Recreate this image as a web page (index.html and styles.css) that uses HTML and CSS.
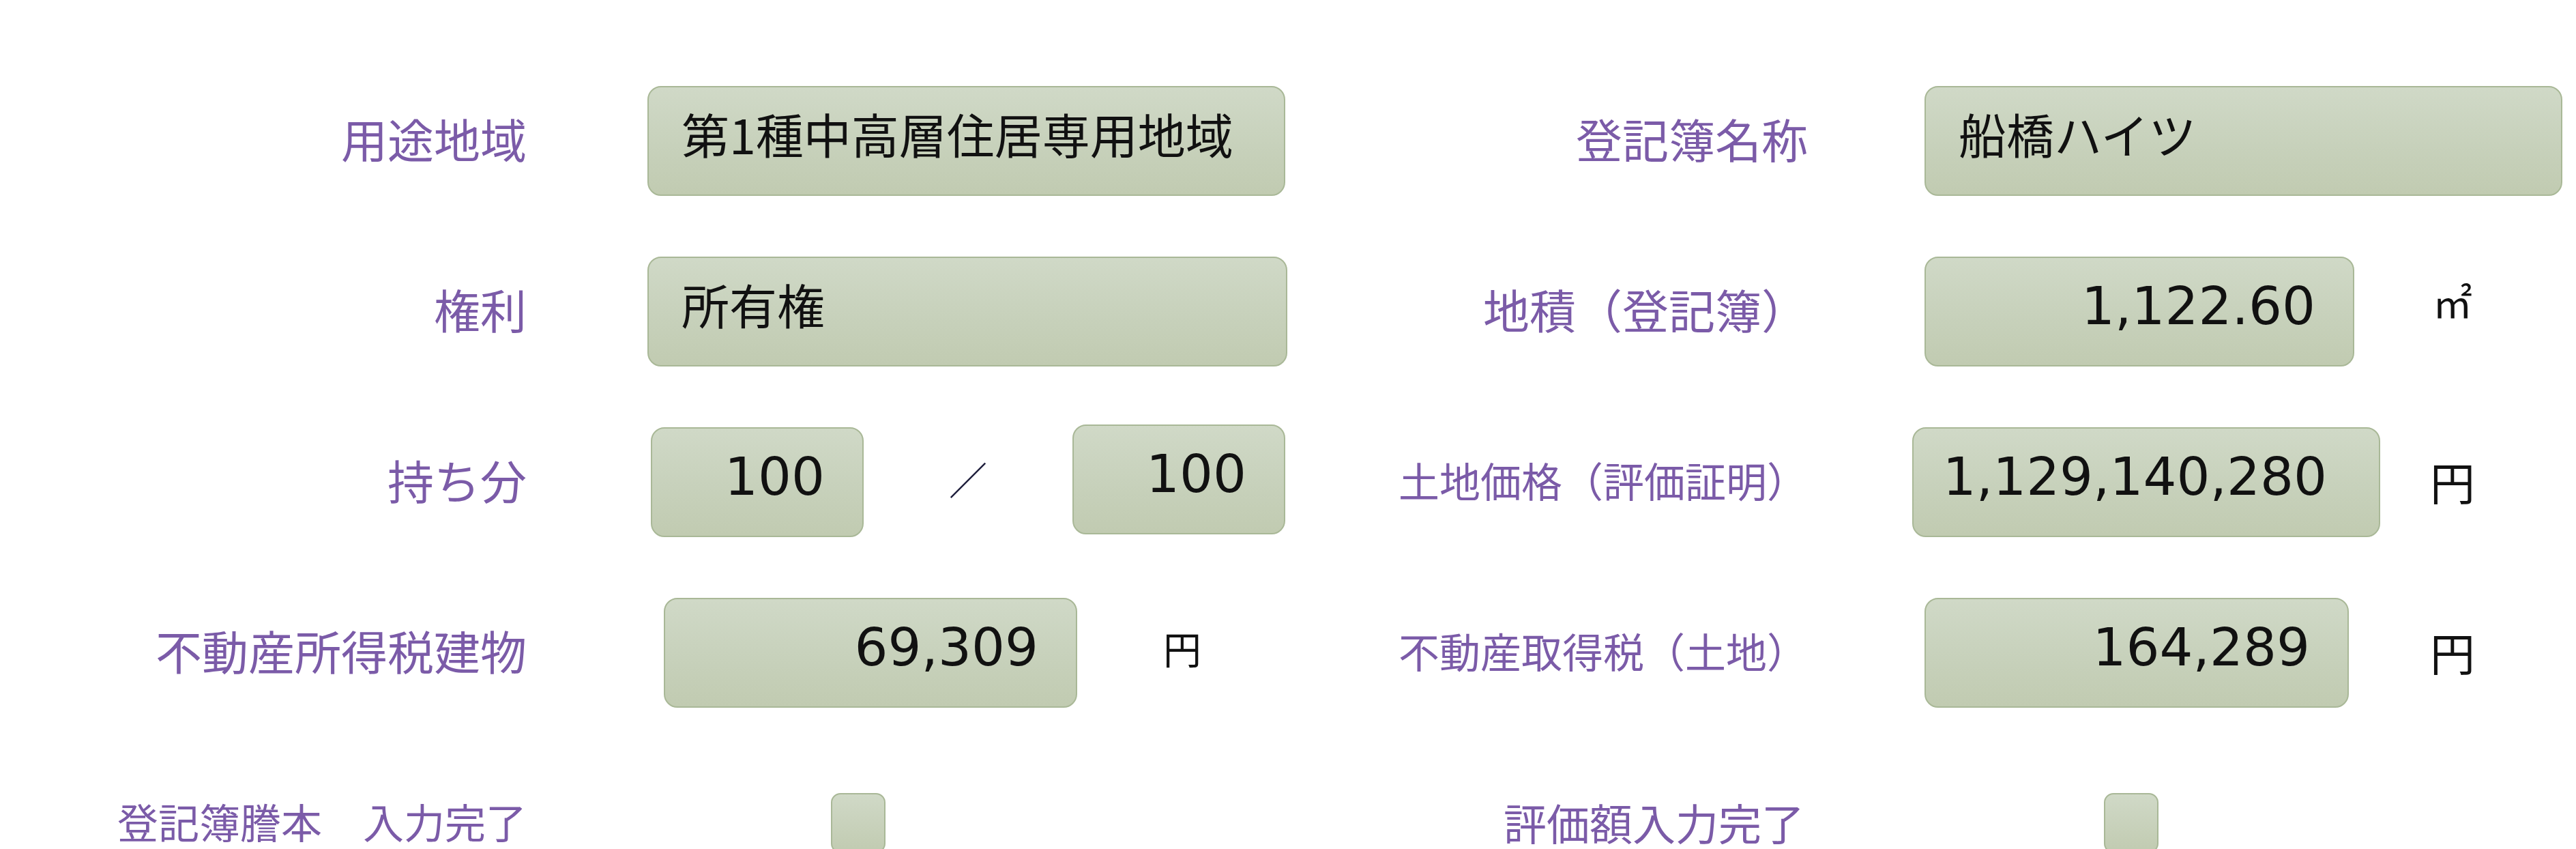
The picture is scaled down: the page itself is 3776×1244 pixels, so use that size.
FILE: index.html
```html
<!DOCTYPE html>
<html lang="ja">
<head>
<meta charset="utf-8">
<title>登記簿情報</title>
<link rel="stylesheet" href="styles.css">
</head>
<body>
<main class="form">
  <div class="row">
    <div class="label">用途地域</div>
    <div class="cell-l">
      <div class="field text w-935">第1種中高層住居専用地域</div>
    </div>
    <div class="label label-r">登記簿名称</div>
    <div class="cell-r">
      <div class="field text w-935 span-all off-18">船橋ハイツ</div>
    </div>
  </div>

  <div class="row">
    <div class="label">権利</div>
    <div class="cell-l">
      <div class="field text w-938">所有権</div>
    </div>
    <div class="label label-r">地積（登記簿）</div>
    <div class="cell-r">
      <div class="field num w-630 off-18">1,122.60</div>
      <div class="unit unit-m2">㎡</div>
    </div>
  </div>

  <div class="row">
    <div class="label">持ち分</div>
    <div class="cell-l">
      <div class="ratio">
        <div class="field num w-312">100</div>
        <div class="slash">／</div>
        <div class="field num w-312 up-4">100</div>
      </div>
    </div>
    <div class="label label-r label-sm">土地価格（評価証明）</div>
    <div class="cell-r">
      <div class="field num w-686 pad-r-wide">1,129,140,280</div>
      <div class="unit">円</div>
    </div>
  </div>

  <div class="row">
    <div class="label">不動産所得税建物</div>
    <div class="cell-l">
      <div class="field num w-606 off-24">69,309</div>
      <div class="unit unit-sm">円</div>
    </div>
    <div class="label label-r label-sm">不動産取得税（土地）</div>
    <div class="cell-r">
      <div class="field num w-622 off-18">164,289</div>
      <div class="unit">円</div>
    </div>
  </div>

  <div class="row">
    <div class="label label-sm">登記簿謄本　入力完了</div>
    <div class="cell-l">
      <div class="check check-l"></div>
    </div>
    <div class="label label-r label-md">評価額入力完了</div>
    <div class="cell-r">
      <div class="check check-r"></div>
    </div>
  </div>
</main>
</body>
</html>
```

FILE: styles.css
```css
html, body {
  margin: 0;
  padding: 0;
  background: #ffffff;
}

body {
  font-family: "Noto Sans CJK JP", "Noto Sans", sans-serif;
  color: #111111;
  overflow: hidden;
}

.form {
  padding-top: 81px;
  display: flex;
  flex-direction: column;
}

.row {
  display: grid;
  grid-template-columns: 772px 177px 1001px 700px 153px 973px;
  height: 250px;
  align-items: center;
}

.label {
  grid-column: 1;
  text-align: right;
  font-size: 68px;
  line-height: 1;
  color: #7b5ba8;
  padding-bottom: 6px;
  white-space: nowrap;
}

.label-r {
  grid-column: 4;
}

.label-sm {
  font-size: 60px;
}

.label-md {
  font-size: 63px;
  padding-right: 5px;
}

.cell-l {
  grid-column: 3;
  display: flex;
  align-items: center;
}

.cell-r {
  grid-column: 6;
  display: grid;
  grid-template-columns: 757px 70px;
  align-items: center;
}

.field {
  box-sizing: border-box;
  height: 161px;
  border: 2px solid #a9b897;
  border-radius: 20px;
  background: linear-gradient(to bottom, #d0d9c7 0%, #c7d1bb 55%, #c1cbb1 100%);
  display: flex;
  align-items: center;
  white-space: nowrap;
}

.text {
  font-size: 70px;
  line-height: 1;
  padding-left: 48px;
  padding-bottom: 20px;
}

.num {
  font-family: "DejaVu Sans", "Noto Sans CJK JP", sans-serif;
  font-size: 77px;
  line-height: 1;
  justify-content: flex-end;
  padding-right: 55px;
  padding-bottom: 16px;
}

.pad-r-wide {
  padding-right: 76px;
}

.span-all {
  grid-column: 1 / -1;
}

.w-935 { width: 935px; }
.w-938 { width: 938px; }
.w-312 { width: 312px; }
.w-630 { width: 630px; }
.w-686 { width: 686px; }
.w-606 { width: 606px; }
.w-622 { width: 622px; }

.off-18 { margin-left: 18px; }
.off-24 { margin-left: 24px; }

.up-4 { margin-bottom: 8px; }

.ratio {
  width: 930px;
  margin-left: 5px;
  display: flex;
  align-items: center;
  justify-content: space-between;
}

.slash {
  font-size: 56px;
  line-height: 1;
  color: #1c1c3a;
  padding-bottom: 10px;
}

.unit {
  font-size: 66px;
  line-height: 1;
  text-align: center;
  color: #111111;
  padding-bottom: 4px;
}

.unit-m2 {
  font-size: 58px;
  padding-bottom: 30px;
}

.unit-sm {
  font-size: 56px;
  margin-left: 126px;
  padding-bottom: 14px;
}

.check {
  box-sizing: border-box;
  width: 80px;
  height: 88px;
  border: 2px solid #a9b897;
  border-radius: 14px;
  background: linear-gradient(to bottom, #d0d9c7 0%, #c1cbb1 100%);
}

.check-l {
  margin-left: 269px;
}

.check-r {
  margin-left: 281px;
}
```
